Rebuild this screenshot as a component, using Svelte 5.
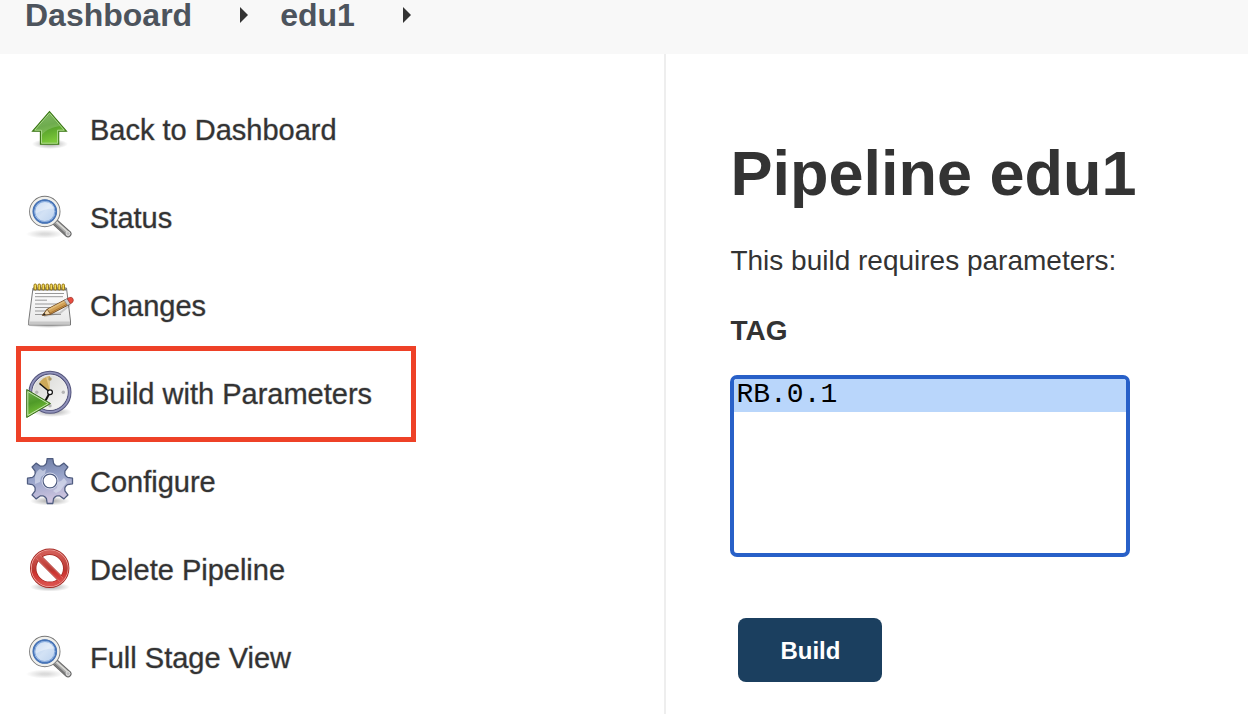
<script>
  const tasks = [
    { label: 'Back to Dashboard', icon: 'up' },
    { label: 'Status', icon: 'search' },
    { label: 'Changes', icon: 'notepad' },
    { label: 'Build with Parameters', icon: 'clock', marked: true },
    { label: 'Configure', icon: 'gear' },
    { label: 'Delete Pipeline', icon: 'delete' },
    { label: 'Full Stage View', icon: 'search' }
  ];

  const crumbs = ['Dashboard', 'edu1'];
  const tags = ['RB.0.1'];
  let tag = $state('RB.0.1');

  // Outline of an eight-toothed wheel: [radius, half width] pairs for each tooth.
  const tooth = [[15.5, -5.5], [17.5, -3.6], [22.5, -2.8], [22.5, 2.8], [17.5, 3.6], [15.5, 5.5]];
  const gear = Array.from({ length: 8 }, (_, i) => (i * Math.PI) / 4)
    .flatMap((a) =>
      tooth.map(([r, w]) => [
        (24 + r * Math.sin(a) + w * Math.cos(a)).toFixed(2),
        (23 - r * Math.cos(a) + w * Math.sin(a)).toFixed(2)
      ].join(','))
    )
    .join(' ');

  const rings = [9, 13, 17, 21, 25, 29, 33, 37];
</script>

<svg class="defs" width="0" height="0" aria-hidden="true">
  <defs>
    <radialGradient id="shade"><stop offset="0.2" stop-color="#000" stop-opacity=".28" /><stop offset="1" stop-color="#000" stop-opacity="0" /></radialGradient>
    <linearGradient id="green" x1="0" y1="0" x2="0.3" y2="1"><stop offset="0" stop-color="#6fae4e" /><stop offset=".5" stop-color="#4f9a28" /><stop offset="1" stop-color="#7cc83a" /></linearGradient>
    <linearGradient id="glass" x1="0" y1="0" x2="1" y2="1"><stop offset="0" stop-color="#a5c3ea" /><stop offset=".5" stop-color="#d3e2f5" /><stop offset="1" stop-color="#b4cdec" /></linearGradient>
    <linearGradient id="paper" x1="0" y1="0" x2="0" y2="1"><stop offset="0" stop-color="#fff" /><stop offset="1" stop-color="#e6e6e6" /></linearGradient>
    <linearGradient id="steel" x1="0" y1="0" x2=".2" y2="1"><stop offset="0" stop-color="#67769f" /><stop offset=".5" stop-color="#98a4ca" /><stop offset="1" stop-color="#cfc5e0" /></linearGradient>
    <linearGradient id="red" gradientUnits="userSpaceOnUse" x1="0" y1="3" x2="0" y2="42"><stop offset="0" stop-color="#d8645e" /><stop offset=".55" stop-color="#b93731" /><stop offset=".6" stop-color="#cc3430" /><stop offset="1" stop-color="#e05a56" /></linearGradient>
    <linearGradient id="face" x1="0" y1="0" x2="1" y2="1"><stop offset="0" stop-color="#d4d4d0" /><stop offset="1" stop-color="#fafafa" /></linearGradient>
  </defs>
</svg>

{#snippet icon(name)}
  <svg class="icon" viewBox="0 0 48 48" aria-hidden="true">
    {#if name === 'up'}
      <ellipse cx="24" cy="38" rx="18" ry="5" fill="url(#shade)" />
      <path d="M23.5 5.5 40.5 25.2H32.7V38.3H14.4V25.2H6.5Z" fill="url(#green)" stroke="#3a7514" stroke-width="1.1" />
      <path d="M23.5 7.2 38.2 24.2H31.6V37.2H15.5V24.2H8.8Z" fill="none" stroke="#b4dc98" stroke-width=".9" />
      <path d="M23.5 8 34 20C28 21 20 23 16 29V23.7H10Z" fill="#fff" opacity=".18" />
    {:else if name === 'search'}
      <ellipse cx="19" cy="40" rx="19" ry="4.5" fill="url(#shade)" opacity=".5" />
      <path d="m29 28 13 11.800" stroke="#666" stroke-width="7" stroke-linecap="round" />
      <path d="m29 28 13 11.800" stroke="#aaa" stroke-width="5" stroke-linecap="round" />
      <path d="m30 27.5 12 10.800" stroke="#deded9" stroke-width="1.5" />
      <path d="m28.5 30 12 11" stroke="#747474" stroke-width="1.2" />
      <circle cx="42" cy="39.6" r="1.9" fill="#bbb" stroke="#ddd" />
      <circle cx="18.8" cy="17.5" r="13.5" fill="url(#glass)" stroke="#777" stroke-width="4.4" />
      <circle cx="18.8" cy="17.5" r="13.4" fill="none" stroke="#f0f0ed" stroke-width="2.800" />
      <circle cx="18.8" cy="17.5" r="11.4" fill="none" stroke="#4775b9" stroke-width="1.8" />
      <circle cx="18.8" cy="17.5" r="10" fill="none" stroke="#84a9dd" />
      <path d="M9.5 20C9 12 14 8 20 8.300c5 0 8 3 8.500 6.500-6-.5-12 .5-19 5.200Z" fill="#fff" opacity=".35" />
    {:else if name === 'notepad'}
      <ellipse cx="23" cy="43" rx="23" ry="3" fill="url(#shade)" />
      <path d="M7 6H40.500L44.500 39V43H2.700V39Z" fill="url(#paper)" stroke="#777" />
      <path d="M3.200 39.500H44V42.500H3.200Z" fill="#c8c8c8" />
      <path d="M9 14.700H37M9 18.200H21M9 22H37M9 25.500H33M9 29H27M9 32.500H35M9 11.500H38" stroke="#999" />
      <path d="M7 7.500H40.500" stroke="#777" stroke-width="2" />
      {#each rings as x}
        <rect x={x - 1} y="2" width="2.500" height="6" rx="1.200" fill="#f4da5b" stroke="#8b6b09" stroke-width=".9" />
      {/each}
      <path d="M18 34 34 31 44 23" stroke="#555" stroke-width="2" fill="none" opacity=".25" />
      <path d="M16.500 33.300 21.200 27.200 40.200 17.200 43.600 22.300 24.500 32.300Z" fill="#d1a055" stroke="#664018" stroke-width=".9" />
      <path d="m22 28 18.500-9.700" stroke="#e2bd7a" stroke-width="1.500" />
      <path d="m23.800 31.200 18.500-9.700" stroke="#ad742d" />
      <path d="M16.500 33.300 21.200 27.200 24.500 32.300Z" fill="#efd5aa" stroke="#664018" stroke-width=".7" />
      <path d="m16.500 33.300 2-2.400 1.300 1.800Z" fill="#222" />
      <path d="m38.200 18.200 3-1.600 3.300 5.200-3 1.600Z" fill="#ccc" stroke="#777" stroke-width=".6" />
      <path d="m41.200 16.600 2.500-1.200q2.200-.5 3.300 1.300.9 2-.5 3.700l-2 1.400Z" fill="#e94c3f" stroke="#96352b" stroke-width=".7" />
    {:else if name === 'clock'}
      <ellipse cx="26" cy="42" rx="20" ry="5" fill="url(#shade)" />
      <circle cx="24" cy="22.300" r="19.500" fill="url(#face)" stroke="#55567d" stroke-width="4" />
      <circle cx="24" cy="22.300" r="19.600" fill="none" stroke="#9294bc" stroke-width="1.800" />
      <circle cx="24" cy="22.300" r="17.200" fill="none" stroke="#eee" stroke-width="1" />
      <path d="M24 22.300 13 13Q17 7 24 6Z" fill="#cda959" />
      <path d="M24 21V8L20 7Z" fill="#e4c98b" />
      <circle cx="24" cy="9" r="1.700" fill="#a99767" /><circle cx="37.300" cy="22.300" r="1.700" fill="#b5b5b5" /><circle cx="24" cy="35.700" r="1.700" fill="#b5b5b5" /><circle cx="10.700" cy="22.300" r="1.700" fill="#b5b5b5" />
      <path d="M24 22.300 13.500 13.500" stroke="#111" stroke-width="1.500" /><path d="m24 22.300-4.300 8" stroke="#111" stroke-width="2" />
      <circle cx="24" cy="22.300" r="2.400" fill="#fff" stroke="#111" stroke-width="1.200" />
      <path d="M.7 19.500V47.500L24.500 33.500Z" fill="url(#green)" stroke="#3a6b1c" />
      <path d="M1.800 21.500V45.500L22.300 33.500Z" fill="none" stroke="#c8e6b2" />
    {:else if name === 'gear'}
      <ellipse cx="24" cy="43" rx="20" ry="4.500" fill="url(#shade)" />
      <path fill-rule="evenodd" d="M{gear}Z M17 23a7 7 0 1 0 14 0a7 7 0 1 0-14 0Z" fill="url(#steel)" stroke="#505d80" stroke-width="1.300" stroke-linejoin="round" />
      <path d="M9 22c-1-5 2-9 5-11l3 2 3-2-1 5-4 3-1 5-5 2ZM38 20l-3 3-3 1-1 6-4 3 3 2 4-2 3-4 4-5Z" fill="#dde2f2" opacity=".6" />
      <circle cx="24" cy="23" r="8" fill="none" stroke="#d5d9eb" stroke-width=".9" />
    {:else}
      <ellipse cx="24" cy="41" rx="20" ry="4.500" fill="url(#shade)" />
      <circle cx="23.700" cy="22.300" r="15" fill="#fff" />
      <g fill="none" stroke="#a52822"><circle cx="23.700" cy="22.300" r="16.500" stroke-width="6.400" /><path d="m12.500 11 22.500 22.500" stroke-width="6.400" /></g>
      <circle cx="23.700" cy="22.300" r="18.200" fill="none" stroke="#f3aaa5" stroke-width="1.200" />
      <circle cx="23.700" cy="22.300" r="16" fill="none" stroke="url(#red)" stroke-width="4" />
      <path d="m12 10.500 23.500 23.500" stroke="#e58c86" stroke-width="5.200" />
      <path d="m12 10.500 23.500 23.500" stroke="url(#red)" stroke-width="4.200" />
    {/if}
  </svg>
{/snippet}

<div class="page">
  <nav class="crumbs" aria-label="Breadcrumb">
    {#each crumbs as crumb}
      <a href="#{crumb}">{crumb}</a>
      <svg class="sep" viewBox="0 0 8 16" aria-hidden="true"><path d="M0 0 8 8 0 16Z" fill="#333" /></svg>
    {/each}
  </nav>

  <div class="body">
    <nav class="tasks" aria-label="Tasks">
      {#each tasks as task}
        <a class:marked={task.marked} href="#{task.icon}">
          {@render icon(task.icon)}
          <span>{task.label}</span>
        </a>
      {/each}
    </nav>

    <main>
      <h1>Pipeline edu1</h1>
      <p>This build requires parameters:</p>
      <form onsubmit={(e) => e.preventDefault()}>
        <label for="tag">TAG</label>
        <select id="tag" size="5" bind:value={tag}>
          {#each tags as t}
            <option value={t}>{t}</option>
          {/each}
        </select>
        <button type="submit">Build</button>
      </form>
    </main>
  </div>
</div>

<style>
  :global(body) {
    margin: 0;
    background: #fff;
  }
  .defs {
    position: absolute;
  }
  .page {
    display: flex;
    flex-direction: column;
    min-height: 100vh;
    font-family: 'Helvetica Neue', 'Liberation Sans', Arial, sans-serif;
    font-size: 28px;
    line-height: 32px;
    color: #333;
  }
  .crumbs {
    display: flex;
    align-items: center;
    gap: 48px;
    padding: 0 25px 24px;
    background: #f8f8f8;
    font-size: 32px;
    line-height: 30px;
    font-weight: 700;
  }
  a {
    color: inherit;
    text-decoration: none;
  }
  .crumbs a {
    color: #4d545d;
  }
  .sep {
    width: 8px;
    height: 16px;
  }
  .sep + a {
    margin-left: -16px;
  }
  .body {
    display: flex;
    flex: 1;
  }
  .tasks {
    box-sizing: border-box;
    width: 53.4%;
    padding-top: 32px;
    border-right: 2px solid #eee;
    font-size: 29px;
  }
  .tasks a {
    position: relative;
    display: flex;
    align-items: center;
    gap: 16px;
    width: fit-content;
    height: 88px;
    padding: 0 40px 0 26px;
    -webkit-text-stroke: 1px rgb(51 51 51 / 0.35);
  }
  .marked::after {
    content: '';
    position: absolute;
    inset: -4px -4px -4px 16px;
    border: 5px solid #ee4127;
  }
  .icon {
    flex: none;
    width: 48px;
    height: 48px;
  }
  main {
    flex: 1;
    padding: 82px 64px 32px;
  }
  h1 {
    margin: 0 0 35px;
    font-size: 63px;
    line-height: 74px;
  }
  p {
    margin: 0 0 38px;
  }
  form {
    display: flex;
    flex-direction: column;
    align-items: flex-start;
  }
  label {
    margin-bottom: 28px;
    font-weight: 700;
  }
  select {
    width: 400px;
    max-width: 100%;
    height: 182px;
    box-sizing: border-box;
    padding: 0;
    overflow: hidden;
    border: 4px solid #2860c8;
    border-radius: 7px;
    outline: none;
    background: #fff;
    font: 28px/33px 'Liberation Mono', monospace;
  }
  option {
    min-height: 33px;
    padding: 0 2px;
    box-sizing: border-box;
    color: #000;
  }
  option:checked {
    background: #b9d6fb linear-gradient(#b9d6fb, #b9d6fb);
    color: #000;
  }
  button {
    margin: 61px 8px 0;
    padding: 2px 0 0;
    width: 144px;
    height: 64px;
    border: 0;
    border-radius: 8px;
    background: #1b3f5f;
    color: #fff;
    font: 700 24px 'Liberation Sans', Arial, sans-serif;
  }
</style>
